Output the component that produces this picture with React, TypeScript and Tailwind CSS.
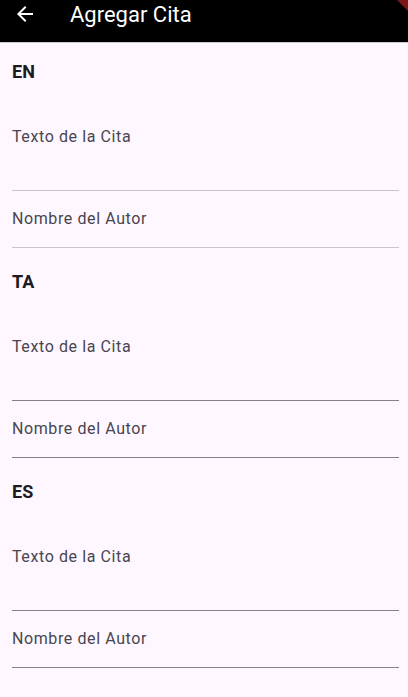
import React from 'react';

const LANGS = ['EN', 'TA', 'ES'];

const BackArrow = () => (
  <svg viewBox="0 0 24 24" className="w-6 h-6" fill="currentColor">
    <path d="M20 11H7.83l5.59-5.59L12 4l-8 8 8 8 1.41-1.41L7.83 13H20v-2z" />
  </svg>
);

const Field = ({ label, tall, lineClass }: { label: string; tall?: boolean; lineClass: string }) => (
  <div className={`border-b ${lineClass} ${tall ? 'h-[107px] pt-[41px]' : 'h-[57px] pt-[16px]'}`}>
    <span className="block text-[16px] leading-6 tracking-[0.6px] text-[#49454F]">{label}</span>
  </div>
);

export default function App() {
  return (
    <div className="relative min-h-screen bg-[#FEF7FF] font-['Roboto',sans-serif] overflow-hidden">
      <header className="h-[43px] bg-black border-b border-[#CFCBD3] flex items-start">
        <button className="mt-[2px] ml-[13px] text-white">
          <BackArrow />
        </button>
        <h1 className="ml-[33px] mt-[1px] text-[22px] leading-7 text-white">Agregar Cita</h1>
      </header>

      <svg className="absolute top-0 right-0 w-[11px] h-[11px]" viewBox="0 0 11 11">
        <polygon points="0,0 11,0 11,11" fill="#7d1717" />
      </svg>

      <form className="pl-3 pr-[9px] pt-[17px]">
        {LANGS.map((lang, i) => {
          const lineClass = i === 0 ? 'border-[#CAC4D0]' : 'border-[#85818A]';
          return (
            <section key={lang} className={i > 0 ? 'mt-[22px]' : ''}>
              <h2 className="text-[18px] leading-6 font-bold text-[#1D1B20]">{lang}</h2>
              <Field label="Texto de la Cita" tall lineClass={lineClass} />
              <Field label="Nombre del Autor" lineClass={lineClass} />
            </section>
          );
        })}
      </form>
    </div>
  );
}
